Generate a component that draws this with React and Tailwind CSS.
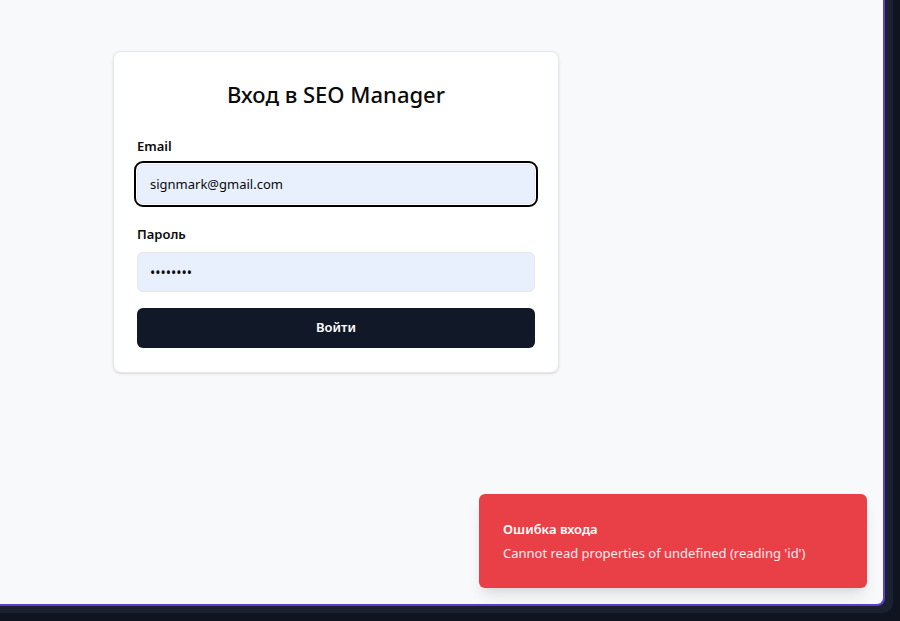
export default function App() {
  const font = { fontFamily: '"Noto Sans", "Open Sans", sans-serif' };
  return (
    <div className="w-[900px] h-[621px] bg-[#0f1420] overflow-hidden" style={font}>
      <div className="w-[893px] h-[613px] bg-[#1b2131] rounded-br-[10px]">
        <div className="relative w-[885px] h-[606px] bg-[#f8f9fb] border-r-2 border-b-2 border-[#5a3fd0] rounded-br-[8px]">
          <div className="pt-[51px] pl-[113px]">
            <div className="w-[446px] bg-white border border-[#e5e7eb] rounded-lg shadow-sm px-[23px] pt-6 pb-6">
              <h1 className="text-center text-[22px] leading-[36px] font-medium text-[#0a0a0a] mb-6">Вход в SEO Manager</h1>
              <div className="flex flex-col">
                <label className="text-[13px] leading-5 font-semibold text-[#0a0a0a] mb-2">Email</label>
                <input
                  readOnly
                  value="signmark@gmail.com"
                  className="h-10 w-full rounded-md border border-[#e5e7eb] bg-[#e8f0fe] px-3 text-[13px] text-[#0a0a0a] outline-2 outline-black outline-offset-[1px]"
                />
                <label className="mt-5 text-[13px] leading-5 font-semibold text-[#0a0a0a] mb-2">Пароль</label>
                <input
                  readOnly
                  type="password"
                  value="12345678"
                  className="h-10 w-full rounded-md border border-[#e5e7eb] bg-[#e8f0fe] px-3 text-sm text-[#0a0a0a] outline-none"
                />
                <button className="mt-4 h-10 w-full rounded-md bg-[#111827] text-white text-[13px] font-semibold">Войти</button>
              </div>
            </div>
          </div>
          <div className="absolute right-4 bottom-4 w-[388px] rounded-md bg-[#e93f46] shadow-lg px-6 pt-[25px] pb-[25px] text-white">
            <div className="text-[13px] leading-5 font-semibold">Ошибка входа</div>
            <div className="mt-1 text-[13px] leading-5 text-white/90">Cannot read properties of undefined (reading 'id')</div>
          </div>
        </div>
      </div>
    </div>
  );
}
